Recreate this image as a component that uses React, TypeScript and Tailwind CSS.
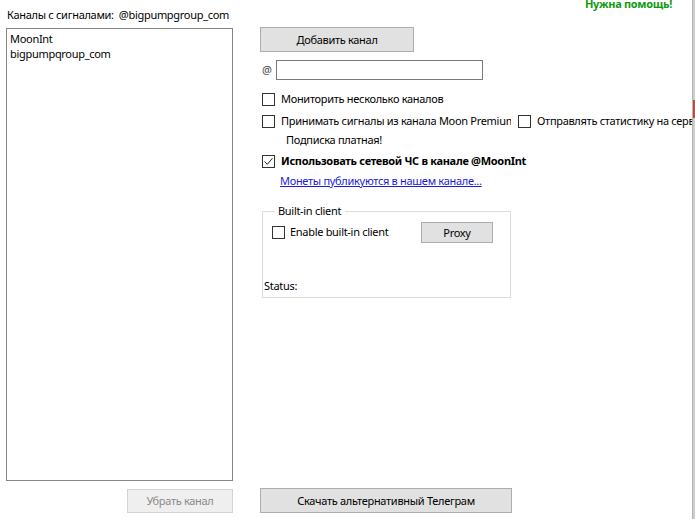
import React from "react";

const font = { fontFamily: '"Noto Sans", "Open Sans", sans-serif' };

function Box({ checked = false }: { checked?: boolean }) {
  return (
    <span className="w-[13px] h-[13px] border border-[#333333] bg-white shrink-0 flex items-center justify-center">
      {checked && (
        <svg width="11" height="11" viewBox="0 0 11 11">
          <path d="M1.5 5.5 L4.3 8.3 L9.5 2.2" fill="none" stroke="#222" strokeWidth="1" />
        </svg>
      )}
    </span>
  );
}

export default function App() {
  return (
    <div
      className="w-[695px] h-[519px] bg-white overflow-hidden flex text-[11px] tracking-[-0.3px] text-black leading-[16px]"
      style={font}
    >
      {/* Left column */}
      <div className="ml-[6px] w-[227px] flex flex-col shrink-0">
        <div className="h-[28px] pt-[7px] pl-[1px] whitespace-nowrap">
          Каналы с сигналами:&nbsp;&nbsp;@bigpumpgroup_com
        </div>
        <div className="h-[453px] border border-[#868686] pl-[3px] pt-[2px] leading-[15px]">
          <div>MoonInt</div>
          <div>bigpumpqroup_com</div>
        </div>
        <div className="mt-[8px] flex justify-end">
          <div className="w-[106px] h-[24px] border border-[#d4d4d4] bg-[#efefef] text-[#8a8a8a] flex items-center justify-center">
            Убрать канал
          </div>
        </div>
      </div>

      {/* Right column */}
      <div className="ml-[27px] flex-1 flex flex-col min-w-0">
        <div className="h-[27px] flex justify-end pr-[20px]">
          <span className="mt-[-4px] font-bold text-[#129a12] leading-[16px]">Нужна помощь!</span>
        </div>
        <div className="w-[154px] h-[25px] border border-[#adadad] bg-[#e1e1e1] flex items-center justify-center">
          Добавить канал
        </div>
        <div className="mt-[8px] h-[20px] flex items-center">
          <span className="ml-[2px] w-[14px] text-[#444]">@</span>
          <div className="w-[207px] h-[20px] border border-[#7a7a7a] bg-white" />
        </div>
        <div className="mt-[9px] h-[20px] flex items-center pl-[2px]">
          <Box />
          <span className="ml-[6px] whitespace-nowrap">Мониторить несколько каналов</span>
        </div>
        <div className="mt-[2px] h-[20px] flex items-center pl-[2px]">
          <Box />
          <span className="ml-[6px] w-[230px] overflow-hidden whitespace-nowrap">
            Принимать сигналы из канала Moon Premium
          </span>
          <span className="ml-[7px]">
            <Box />
          </span>
          <span className="ml-[6px] overflow-hidden whitespace-nowrap flex-1 min-w-0">
            Отправлять статистику на сервер
          </span>
        </div>
        <div className="h-[18px] flex items-center pl-[26px]">Подписка платная!</div>
        <div className="mt-[2px] h-[20px] flex items-center pl-[2px]">
          <Box checked />
          <span className="ml-[6px] font-bold whitespace-nowrap">Использовать сетевой ЧС в канале @MoonInt</span>
        </div>
        <div className="h-[20px] flex items-center pl-[20px]">
          <span className="text-[#1b1bd8] underline whitespace-nowrap">Монеты публикуются в нашем канале...</span>
        </div>

        <div className="mt-[20px] ml-[2px] w-[249px] h-[87px] border border-[#dcdcdc] flex flex-col">
          <div className="h-0 pl-[11px]">
            <span className="relative -top-[9px] bg-white px-[4px]">Built-in client</span>
          </div>
          <div className="mt-[10px] flex items-start">
            <div className="ml-[9px] mt-[2px] flex items-center">
              <Box />
              <span className="ml-[5px] whitespace-nowrap">Enable built-in client</span>
            </div>
            <div className="ml-auto mr-[17px] w-[72px] h-[21px] border border-[#adadad] bg-[#e1e1e1] flex items-center justify-center">
              Proxy
            </div>
          </div>
          <div className="mt-auto mb-[3px] pl-[1px]">Status:</div>
        </div>

        <div className="mt-auto mb-[6px] w-[252px] h-[25px] border border-[#adadad] bg-[#e1e1e1] flex items-center justify-center">
          Скачать альтернативный Телеграм
        </div>
      </div>

      {/* Right edge strip */}
      <div className="w-[3px] shrink-0 bg-[#cdcdcd] border-l border-[#b5b5b5] flex flex-col">
        <div className="h-[100px]" />
        <div className="h-[18px] bg-[#c94a3a]" />
        <div className="flex-1" />
      </div>
    </div>
  );
}
